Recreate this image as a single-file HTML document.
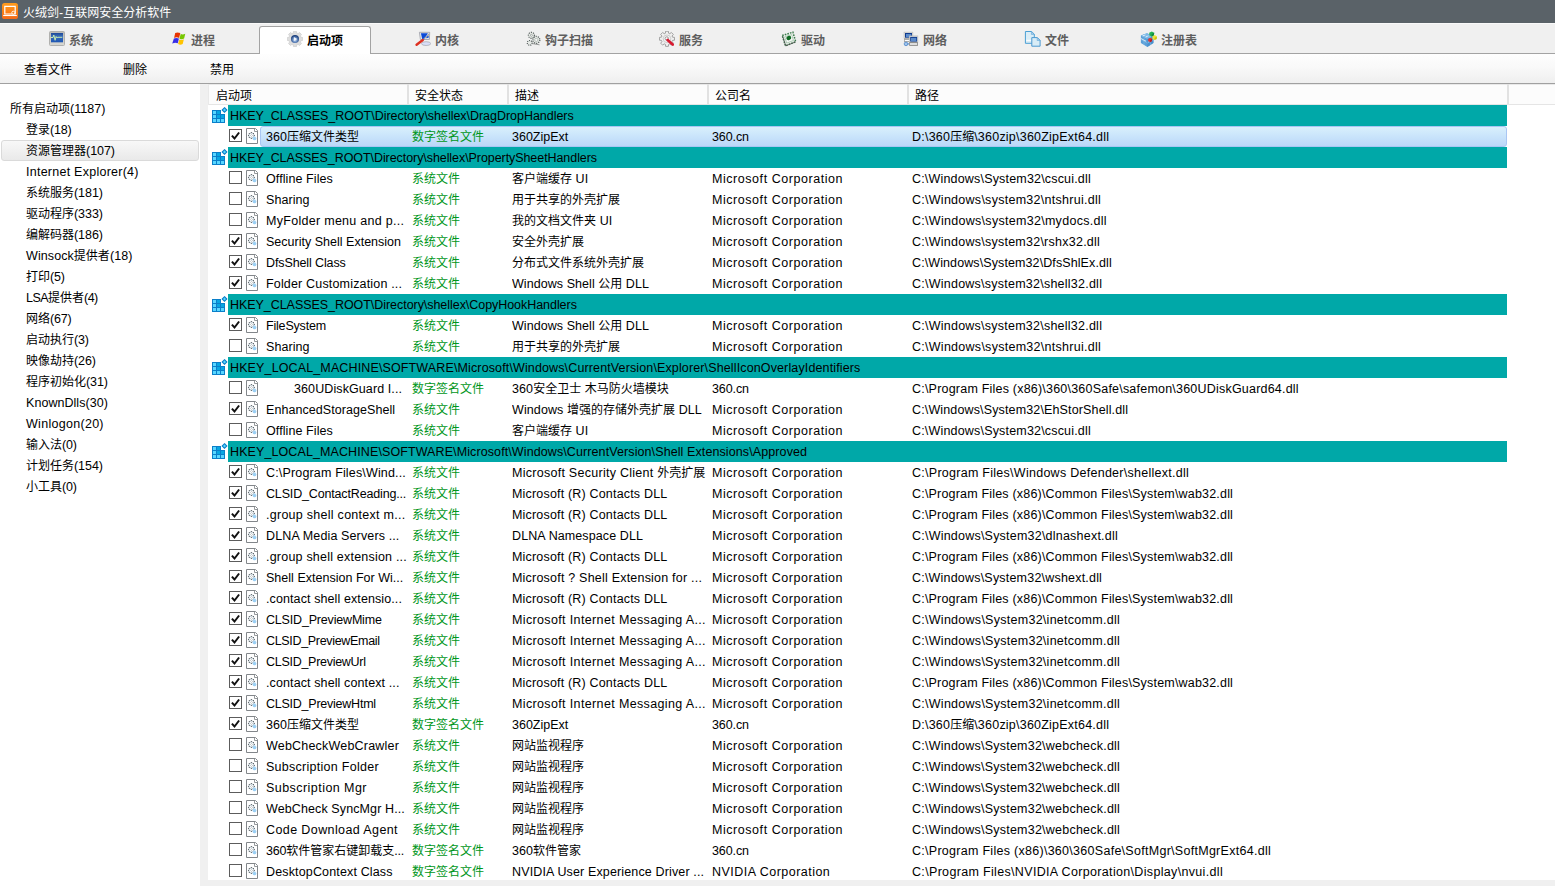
<!DOCTYPE html>
<html lang="zh-CN"><head><meta charset="utf-8"><title>火绒剑-互联网安全分析软件</title>
<style>
*{margin:0;padding:0;box-sizing:border-box}
html,body{width:1555px;height:886px;overflow:hidden;background:#f0f0f0}
body{position:relative;font-family:"Liberation Sans","Noto Sans CJK SC",sans-serif;font-size:12px;color:#000;line-height:21px}
.l{font-size:12.5px}
.abs{position:absolute}
#title{left:0;top:0;width:1555px;height:23px;background:#5a6268;color:#fff;line-height:23px}
#title .ic{position:absolute;left:2px;top:3px;width:16px;height:16px}
#title>span{position:absolute;left:23px;top:2px;white-space:nowrap}
#tabs{left:0;top:23px;width:1555px;height:31px;background:#f0f0f0;border-bottom:1px solid #a3a3a3;box-shadow:inset 0 1px 0 #f9f9f9}
.tab{position:absolute;top:3px;height:28px;width:112px;font-weight:bold;color:#5e5e5e;white-space:nowrap}
.tab svg{position:absolute;top:5px}
.tab span{position:absolute;top:5px;line-height:21px}
.tab.on svg{top:4px}.tab.on span{top:4px}
.tab.on{background:#fff;border:1px solid #a3a3a3;border-bottom:none;border-radius:3px 3px 0 0;color:#000;height:29px}
#tool{left:0;top:54px;width:1555px;height:30px;background:linear-gradient(#fefefe,#f9f9f9 45%,#efefef);border-bottom:1px solid #a0a0a0}
#tool span{position:absolute;top:6px;white-space:nowrap}
#side{left:0;top:84px;width:200px;height:802px;background:#fff}
.si{position:absolute;left:0;width:200px;height:21px;white-space:nowrap}
.si>span{position:absolute;top:1px}
.si.sel{left:1px;width:198px;background:linear-gradient(#f8f8f8,#e9e9e9);border:1px solid #dadada;border-radius:3px}
.si.sel>span{top:0}
#list{left:208px;top:84px;width:1347px;height:796px;background:#fff;overflow:hidden}
#hdr{position:absolute;left:0;top:0;width:1347px;height:21px;background:#fcfcfc;box-shadow:inset 1px 1px 0 #e9e9e9,inset 0 -1px 0 #e5e5e5}
#hdr span{position:absolute;top:2px;line-height:21px;white-space:nowrap}
#hdr i{position:absolute;top:0;width:2px;height:20px;background:#e2e2e2}
.r{position:absolute;left:0;width:1347px;height:21px;white-space:nowrap}
.g b{position:absolute;left:20px;top:0;width:1279px;height:21px;background:#00a8a8;font-weight:normal;padding-left:2px;padding-top:1px;line-height:21px;overflow:hidden}
.gi{position:absolute;left:4px;top:1px}
.r>span{position:absolute;top:1px;line-height:21px;height:20px;overflow:hidden}
.cb{position:absolute;left:21px;top:3px;width:13px;height:13px;border:1px solid #5c5c5c;background:#fff}
.cb svg{position:absolute;left:0;top:0}
.fi{position:absolute;left:38px;top:2px}
.c1{left:58px;width:142px}.c2{left:204px;color:#00961a}.c3{left:304px;width:196px}.c4{left:504px}.c5{left:704px}
.selbg{position:absolute;left:52px;top:0;width:1247px;height:21px;border:1px solid #a9c6f3;border-radius:3px;background:linear-gradient(#d9f0fc,#c9e4fb 50%,#bbd7f8)}

</style></head><body>
<div id="title" class="abs"><svg class="ic" viewBox="0 0 16 16"><defs><linearGradient id="og" x1="0" y1="0" x2="0" y2="1"><stop offset="0" stop-color="#ff9c1c"/><stop offset=".55" stop-color="#fb7f16"/><stop offset="1" stop-color="#f46a1a"/></linearGradient></defs><rect x="0" y="0" width="16" height="16" rx="2.600" fill="url(#og)"/><path d="M2.800 3.400h10.400v7.600H2.800z" fill="none" stroke="#fff" stroke-width="1.200"/><path d="M1.200 12.500h13.600" stroke="#fff" stroke-width="1.100"/><circle cx="11.300" cy="9.700" r="1.500" fill="#fb8418" stroke="#fff" stroke-width=".900"/></svg><span>火绒剑<span class="l">-</span>互联网安全分析软件</span></div>
<div id="tabs" class="abs">
<div class="tab" style="left:15px"><svg style="left:34px" width="16" height="16" viewBox="0 0 16 16"><defs><linearGradient id="sy1" x1="0" y1="0" x2="0" y2="1"><stop offset="0" stop-color="#b9b9b7"/><stop offset="1" stop-color="#d9d9d3"/></linearGradient><linearGradient id="sy2" x1="0" y1="0" x2="0" y2="1"><stop offset="0" stop-color="#1c4796"/><stop offset=".35" stop-color="#3a6cb8"/><stop offset="1" stop-color="#1d56b4"/></linearGradient></defs><rect x=".5" y=".5" width="15" height="14" rx="1" fill="url(#sy1)" stroke="#b0b0ae"/><rect x="2" y="2" width="12" height="9.300" fill="url(#sy2)"/><path d="M2 6.500h2l.8-2.500 1.300 5.300 1-3.800.9 1.500.8-.700h4.500" fill="none" stroke="#c4eab0" stroke-width="1"/></svg><span style="left:54px">系统</span></div>
<div class="tab" style="left:137px"><svg style="left:34px" width="16" height="16" viewBox="0 0 16 16"><path d="M4.200 1.900Q6.700 .8 9.300 2.100L8.100 6.900Q5.700 5.800 3.100 6.900Z" fill="#e83400"/><path d="M9.700 3Q12 4.100 14.300 2.700L13.100 7.600Q10.800 8.900 8.500 7.700Z" fill="#76c600"/><path d="M2.900 7.500Q5.500 6.400 7.900 7.600L6.800 12.300Q4.300 11.300 1.200 12.600Z" fill="#382ee6"/><path d="M8.300 8.400Q10.600 9.500 12.900 8.200L11.700 13Q9.400 14.300 7.100 13.100Z" fill="#ffc400"/></svg><span style="left:54px">进程</span></div>
<div class="tab on" style="left:259px;top:3px"><svg style="left:27px" width="16" height="16" viewBox="0 0 16 16"><defs><radialGradient id="gb" cx=".5" cy=".62" r=".55"><stop offset="0" stop-color="#dfe9f7"/><stop offset=".45" stop-color="#6f94c8"/><stop offset="1" stop-color="#1d3f7c"/></radialGradient></defs><path d="M9.66 13.97 L9.39 15.78 L6.61 15.78 L6.34 13.97 L4.95 13.40 L3.48 14.48 L1.52 12.52 L2.60 11.05 L2.03 9.66 L0.22 9.39 L0.22 6.61 L2.03 6.34 L2.60 4.95 L1.52 3.48 L3.48 1.52 L4.95 2.60 L6.34 2.03 L6.61 0.22 L9.39 0.22 L9.66 2.03 L11.05 2.60 L12.52 1.52 L14.48 3.48 L13.40 4.95 L13.97 6.34 L15.78 6.61 L15.78 9.39 L13.97 9.66 L13.40 11.05 L14.48 12.52 L12.52 14.48 L11.05 13.40Z" fill="#dedede" stroke="#d0d0d0" stroke-width=".800" stroke-linejoin="round"/><circle cx="8" cy="8" r="4" fill="url(#gb)"/><path d="M6.900 5.900l3.200 2-3.200 2.100z" fill="#f4f6fa"/></svg><span style="left:47px">启动项</span></div>
<div class="tab" style="left:381px"><svg style="left:34px" width="16" height="16" viewBox="0 0 16 16"><path d="M4.400 1.300h10.300l-.3 7.200h-9z" fill="#e6e8ee" stroke="#9a9ca4" stroke-width=".800"/><path d="M5.900 2.200h7l-3.600 6.300h-2z" fill="#0a4ad8"/><path d="M12.200 4.800l1.500-.300v2.200l-2.800.500z" fill="#1a58d8"/><ellipse cx="11.100" cy="12.600" rx="4.600" ry="1.900" fill="#d8def8" stroke="#a2a4ac" stroke-width=".700"/><path d="M8 8.800L14 3" stroke="#a9a9ad" stroke-width="1.100"/><path d="M1.600 13.800L7.800 9" stroke="#de3020" stroke-width="2.400" stroke-linecap="round"/></svg><span style="left:54px">内核</span></div>
<div class="tab" style="left:503px"><svg style="left:23px" width="16" height="16" viewBox="0 0 16 16"><circle cx="5.4" cy="4.3" r="3.0" fill="#e6eae6" stroke="#596160" stroke-width="1.2" stroke-dasharray="1.15 1.05"/><circle cx="5.400" cy="4.300" r="1" fill="#fff" stroke="#7a8280" stroke-width=".600"/><circle cx="10.3" cy="8.9" r="3.5" fill="#e6eae6" stroke="#596160" stroke-width="1.3" stroke-dasharray="1.15 1.05"/><circle cx="10.300" cy="8.900" r="1.600" fill="#f6f8f6" stroke="#9aa29e" stroke-width=".600"/><circle cx="3.7" cy="11.9" r="2.4" fill="#e6eae6" stroke="#596160" stroke-width="1.2" stroke-dasharray="1 .9"/><path d="M6.500 12.600l7 1.200" stroke="#707674" stroke-width="1" opacity=".700"/></svg><span style="left:42px">钩子扫描</span></div>
<div class="tab" style="left:625px"><svg style="left:34px" width="16" height="16" viewBox="0 0 16 16"><path d="M9.60 13.37 L9.40 15.37 L6.60 15.37 L6.40 13.37 L5.19 12.87 L3.63 14.14 L1.66 12.17 L2.93 10.61 L2.43 9.40 L0.43 9.20 L0.43 6.40 L2.43 6.20 L2.93 4.99 L1.66 3.43 L3.63 1.46 L5.19 2.73 L6.40 2.23 L6.60 0.23 L9.40 0.23 L9.60 2.23 L10.81 2.73 L12.37 1.46 L14.34 3.43 L13.07 4.99 L13.57 6.20 L15.57 6.40 L15.57 9.20 L13.57 9.40 L13.07 10.61 L14.34 12.17 L12.37 14.14 L10.81 12.87Z" fill="#efefef" stroke="#8f8f8f" stroke-width=".800" stroke-linejoin="round"/><circle cx="8" cy="7.800" r="3.800" fill="#f3f3f3" stroke="#c4c4c4" stroke-width=".800"/><circle cx="7.800" cy="7.500" r="1.700" fill="#fff" stroke="#8e8e8e" stroke-width=".900"/><path d="M8.600 8.900L13.700 13.500" stroke="#d81a30" stroke-width="2.700" stroke-linecap="round"/></svg><span style="left:54px">服务</span></div>
<div class="tab" style="left:747px"><svg style="left:34px" width="16" height="16" viewBox="0 0 16 16"><path d="M1.200 4.500L11.900 1.200L14.700 10.700L4.500 14.800Z" fill="#f2f4f2" stroke="#3c7a4c" stroke-width="1.500" stroke-dasharray="1.600 1.100"/><path d="M1.700 5.300L4.700 14.800L14.700 10.900" fill="none" stroke="#4a4f4c" stroke-width="1" opacity=".800"/><path d="M3.700 5.800L10.700 3.600L12.400 9.500L5.700 12.100Z" fill="#f8f8f8" stroke="#7fb08a" stroke-width=".600"/><ellipse cx="7.800" cy="7" rx="2.500" ry="2" fill="#0f6a22" transform="rotate(-18 7.800 7)"/></svg><span style="left:54px">驱动</span></div>
<div class="tab" style="left:869px"><svg style="left:34px" width="16" height="16" viewBox="0 0 16 16"><rect x="1" y="1.100" width="8.900" height="6.200" fill="#dcdcda" stroke="#b4b4b2" stroke-width=".500"/><rect x="2" y="2" width="7" height="4.700" fill="#0f3a8e"/><rect x="3" y="3" width="5.300" height="3.200" fill="#5a8aca"/><rect x="1" y="7.300" width="8.900" height="3.700" fill="#a2a2a0"/><rect x="1.800" y="8.900" width="6" height="1.200" fill="#fff"/><circle cx="3" cy="12.900" r="1.800" fill="#9fc4ec" stroke="#4f86c8" stroke-width=".800"/><path d="M4.600 12.900h2" stroke="#5a90d0" stroke-width="1.200"/><rect x="6.200" y="4.900" width="8.700" height="6.200" fill="#dcdcda" stroke="#b4b4b2" stroke-width=".500"/><rect x="7.200" y="5.900" width="6.900" height="4.700" fill="#0f3a8e"/><rect x="8" y="6.900" width="5.300" height="3.300" fill="#5a8aca"/><rect x="6.200" y="11" width="8.700" height="3.900" fill="#8e8e8c"/><rect x="7" y="12.300" width="7" height="1.400" fill="#fff"/></svg><span style="left:54px">网络</span></div>
<div class="tab" style="left:991px"><svg style="left:33px" width="17" height="16" viewBox="0 0 17 16"><path d="M1.400 .500H7.600L10.300 3.200V12.300H1.400Z" fill="#dbedf6" stroke="#4a9fd4" stroke-width="1"/><path d="M7.400 .600V3.400H10.200Z" fill="#b7d4ec" stroke="#5aa4d6" stroke-width=".600"/><rect x="2.200" y="8.800" width="7" height="1" fill="#fff"/><path d="M7.800 6.600H13.400L16.100 9.300V15.200H7.800Z" fill="#d8ecf6" stroke="#4a98d0" stroke-width="1"/><path d="M13.200 6.700V9.500H16Z" fill="#b7d4ec" stroke="#5aa4d6" stroke-width=".600"/></svg><span style="left:54px">文件</span></div>
<div class="tab" style="left:1113px"><svg style="left:27px" width="18" height="16" viewBox="0 0 18 16"><path d="M.9 4.600L7 2.300L13.400 5.200V12L7.300 15.900L.9 12Z" fill="#5a9fd8"/><path d="M.9 4.600L7 2.300L13.400 5.200L7.300 8Z" fill="#7ab8e6"/><path d="M7.300 8L13.400 5.200V12L7.300 15.900Z" fill="#4a92ce"/><path d="M3 4.800l2-.700M6 5.900l2-.800M3.500 9.100l2.200 1M1.500 7.800l1.800.9M8.800 10.900l3-1.600" stroke="#e6f2fb" stroke-width="1" stroke-linecap="round"/><path d="M.9 8.400l6.400 3.600 6.100-3.300M4 3.500l6.400 3M4 6.400v7.400M10.400 6.600v7.300" stroke="#8cc0e8" stroke-width=".500" fill="none"/><path d="M9.200 1.800l2.600-1.300 2.400 1.300-.300 2.700-2.300 1.100-2.200-1.300z" fill="#22b255"/><path d="M11.700 3l2.500-1.200-.300 2.700-2.300 1.100z" fill="#128a3e"/><path d="M12.400 5.400l2.400-1.300 2.100 1.300-.200 2.500-2.300 1.200-2-1.400z" fill="#eee43a"/><path d="M14.600 6.700l2.300-1.300-.200 2.500-2.300 1.200z" fill="#c8c016"/><path d="M8.200 7.900l2-1.100 1.900 1-.1 2.300-2 1.100-1.800-1.200z" fill="#e03434"/><path d="M10.100 9l2-1.200-.1 2.300-2 1.100z" fill="#b81e1e"/></svg><span style="left:48px">注册表</span></div>
</div>
<div id="tool" class="abs"><span style="left:24px">查看文件</span><span style="left:123px">删除</span><span style="left:210px">禁用</span></div>
<div id="side" class="abs">
<div class="si" style="top:14px"><span style="left:10px">所有启动项<span class="l" style="letter-spacing:0.04px">(1187)</span></span></div>
<div class="si" style="top:35px"><span style="left:26px">登录<span class="l" style="letter-spacing:-0.16px">(18)</span></span></div>
<div class="si sel" style="top:56px"><span style="left:24px">资源管理器<span class="l" style="letter-spacing:-0.04px">(107)</span></span></div>
<div class="si" style="top:77px"><span style="left:26px"><span class="l" style="letter-spacing:0.25px">Internet Explorer(4)</span></span></div>
<div class="si" style="top:98px"><span style="left:26px">系统服务<span class="l" style="letter-spacing:-0.06px">(181)</span></span></div>
<div class="si" style="top:119px"><span style="left:26px">驱动程序<span class="l" style="letter-spacing:-0.06px">(333)</span></span></div>
<div class="si" style="top:140px"><span style="left:26px">编解码器<span class="l" style="letter-spacing:-0.06px">(186)</span></span></div>
<div class="si" style="top:161px"><span style="left:26px"><span class="l" style="letter-spacing:0.09px">Winsock</span>提供者<span class="l" style="letter-spacing:0.09px">(18)</span></span></div>
<div class="si" style="top:182px"><span style="left:26px">打印<span class="l" style="letter-spacing:-0.20px">(5)</span></span></div>
<div class="si" style="top:203px"><span style="left:26px"><span class="l" style="letter-spacing:-0.54px">LSA</span>提供者<span class="l" style="letter-spacing:-0.54px">(4)</span></span></div>
<div class="si" style="top:224px"><span style="left:26px">网络<span class="l" style="letter-spacing:-0.16px">(67)</span></span></div>
<div class="si" style="top:245px"><span style="left:26px">启动执行<span class="l" style="letter-spacing:-0.20px">(3)</span></span></div>
<div class="si" style="top:266px"><span style="left:26px">映像劫持<span class="l" style="letter-spacing:-0.11px">(26)</span></span></div>
<div class="si" style="top:287px"><span style="left:26px">程序初始化<span class="l" style="letter-spacing:-0.09px">(31)</span></span></div>
<div class="si" style="top:308px"><span style="left:26px"><span class="l" style="letter-spacing:0.05px">KnownDlls(30)</span></span></div>
<div class="si" style="top:329px"><span style="left:26px"><span class="l" style="letter-spacing:0.29px">Winlogon(20)</span></span></div>
<div class="si" style="top:350px"><span style="left:26px">输入法<span class="l" style="letter-spacing:-0.17px">(0)</span></span></div>
<div class="si" style="top:371px"><span style="left:26px">计划任务<span class="l" style="letter-spacing:-0.06px">(154)</span></span></div>
<div class="si" style="top:392px"><span style="left:26px">小工具<span class="l" style="letter-spacing:-0.17px">(0)</span></span></div>
</div>
<div id="list" class="abs">
<div id="hdr"><span style="left:8px">启动项</span><i style="left:199px"></i><span style="left:207px">安全状态</span><i style="left:299px"></i><span style="left:307px">描述</span><i style="left:499px"></i><span style="left:507px">公司名</span><i style="left:699px"></i><span style="left:707px">路径</span><i style="left:1299px"></i></div>
<div class="r g" style="top:21px"><svg class="gi" width="16" height="17" viewBox="0 0 16 17" shape-rendering="crispEdges"><path fill="#0a7fc9" d="M0 4h9v4h4v9H0z"/><g fill="#58d6ff"><rect x="1" y="5" width="3" height="3"/><rect x="1" y="9" width="3" height="3"/><rect x="1" y="13" width="3" height="3"/><rect x="5" y="13" width="3" height="3"/><rect x="9" y="13" width="3" height="3"/></g><g fill="#06a6e2"><rect x="5" y="5" width="3" height="3"/><rect x="5" y="9" width="3" height="3"/><rect x="9" y="9" width="3" height="3"/></g><path shape-rendering="geometricPrecision" fill="#58d6ff" stroke="#0a7fc9" stroke-width="1.1" d="M12.5 1.700l2.300 2.300-2.300 2.300L10.200 4z"/></svg><b><span class="l" style="letter-spacing:-0.03px">HKEY_CLASSES_ROOT\Directory\shellex\DragDropHandlers</span></b></div>
<div class="r" style="top:42px"><div class="selbg"></div><div class="cb"><svg width="11" height="11" viewBox="0 0 11 11"><path d="M1.900 5.600l2.600 2.900 4.600-6" fill="none" stroke="#111" stroke-width="2"/></svg></div><svg class="fi" width="12" height="16" viewBox="0 0 12 16"><path fill="#fff" stroke="#82868a" d="M.5 .5h9l2 2v13h-11z"/><path fill="none" stroke="#8a8e92" stroke-width=".900" d="M8.500 .700v2.800h2.800"/><circle cx="5.400" cy="7.500" r="2.700" fill="#e3ecf1" stroke="#9fabb2" stroke-width=".700"/><path fill="#5e6468" d="M7.88 7.03h0.95v0.95h-0.95zM7.01 9.11h0.95v0.95h-0.95zM4.93 9.97h0.95v0.95h-0.95zM2.84 9.11h0.95v0.95h-0.95zM1.98 7.03h0.95v0.95h-0.95zM2.84 4.94h0.95v0.95h-0.95zM4.92 4.08h0.95v0.95h-0.95zM7.01 4.94h0.95v0.95h-0.95z"/><circle cx="5.400" cy="7.500" r="1.700" fill="#fff"/><path fill="#767c80" d="M6.05 7.15h0.70v0.70h-0.70zM5.05 8.15h0.70v0.70h-0.70zM4.05 7.15h0.70v0.70h-0.70zM5.05 6.15h0.70v0.70h-0.70z"/><circle cx="8.500" cy="10.400" r="1.850" fill="#93ccf4"/><path fill="#fff" d="M8.87 10.77h0.60v0.60h-0.60zM7.53 10.77h0.60v0.60h-0.60zM7.53 9.43h0.60v0.60h-0.60zM8.87 9.43h0.60v0.60h-0.60z"/></svg><span class="c1"><span class="l" style="letter-spacing:0.04px">360</span>压缩文件类型</span><span class="c2">数字签名文件</span><span class="c3"><span class="l" style="letter-spacing:-0.01px">360ZipExt</span></span><span class="c4"><span class="l" style="letter-spacing:-0.11px">360.cn</span></span><span class="c5"><span class="l" style="letter-spacing:0.22px">D:\360</span>压缩<span class="l" style="letter-spacing:0.22px">\360zip\360ZipExt64.dll</span></span></div>
<div class="r g" style="top:63px"><svg class="gi" width="16" height="17" viewBox="0 0 16 17" shape-rendering="crispEdges"><path fill="#0a7fc9" d="M0 4h9v4h4v9H0z"/><g fill="#58d6ff"><rect x="1" y="5" width="3" height="3"/><rect x="1" y="9" width="3" height="3"/><rect x="1" y="13" width="3" height="3"/><rect x="5" y="13" width="3" height="3"/><rect x="9" y="13" width="3" height="3"/></g><g fill="#06a6e2"><rect x="5" y="5" width="3" height="3"/><rect x="5" y="9" width="3" height="3"/><rect x="9" y="9" width="3" height="3"/></g><path shape-rendering="geometricPrecision" fill="#58d6ff" stroke="#0a7fc9" stroke-width="1.1" d="M12.5 1.700l2.300 2.300-2.300 2.300L10.200 4z"/></svg><b><span class="l" style="letter-spacing:-0.07px">HKEY_CLASSES_ROOT\Directory\shellex\PropertySheetHandlers</span></b></div>
<div class="r" style="top:84px"><div class="cb"></div><svg class="fi" width="12" height="16" viewBox="0 0 12 16"><path fill="#fff" stroke="#82868a" d="M.5 .5h9l2 2v13h-11z"/><path fill="none" stroke="#8a8e92" stroke-width=".900" d="M8.500 .700v2.800h2.800"/><circle cx="5.400" cy="7.500" r="2.700" fill="#e3ecf1" stroke="#9fabb2" stroke-width=".700"/><path fill="#5e6468" d="M7.88 7.03h0.95v0.95h-0.95zM7.01 9.11h0.95v0.95h-0.95zM4.93 9.97h0.95v0.95h-0.95zM2.84 9.11h0.95v0.95h-0.95zM1.98 7.03h0.95v0.95h-0.95zM2.84 4.94h0.95v0.95h-0.95zM4.92 4.08h0.95v0.95h-0.95zM7.01 4.94h0.95v0.95h-0.95z"/><circle cx="5.400" cy="7.500" r="1.700" fill="#fff"/><path fill="#767c80" d="M6.05 7.15h0.70v0.70h-0.70zM5.05 8.15h0.70v0.70h-0.70zM4.05 7.15h0.70v0.70h-0.70zM5.05 6.15h0.70v0.70h-0.70z"/><circle cx="8.500" cy="10.400" r="1.850" fill="#93ccf4"/><path fill="#fff" d="M8.87 10.77h0.60v0.60h-0.60zM7.53 10.77h0.60v0.60h-0.60zM7.53 9.43h0.60v0.60h-0.60zM8.87 9.43h0.60v0.60h-0.60z"/></svg><span class="c1"><span class="l" style="letter-spacing:0.09px">Offline Files</span></span><span class="c2">系统文件</span><span class="c3">客户端缓存<span class="l" style="letter-spacing:0.10px"> UI</span></span><span class="c4"><span class="l" style="letter-spacing:0.55px">Microsoft Corporation</span></span><span class="c5"><span class="l" style="letter-spacing:0.18px">C:\Windows\System32\cscui.dll</span></span></div>
<div class="r" style="top:105px"><div class="cb"></div><svg class="fi" width="12" height="16" viewBox="0 0 12 16"><path fill="#fff" stroke="#82868a" d="M.5 .5h9l2 2v13h-11z"/><path fill="none" stroke="#8a8e92" stroke-width=".900" d="M8.500 .700v2.800h2.800"/><circle cx="5.400" cy="7.500" r="2.700" fill="#e3ecf1" stroke="#9fabb2" stroke-width=".700"/><path fill="#5e6468" d="M7.88 7.03h0.95v0.95h-0.95zM7.01 9.11h0.95v0.95h-0.95zM4.93 9.97h0.95v0.95h-0.95zM2.84 9.11h0.95v0.95h-0.95zM1.98 7.03h0.95v0.95h-0.95zM2.84 4.94h0.95v0.95h-0.95zM4.92 4.08h0.95v0.95h-0.95zM7.01 4.94h0.95v0.95h-0.95z"/><circle cx="5.400" cy="7.500" r="1.700" fill="#fff"/><path fill="#767c80" d="M6.05 7.15h0.70v0.70h-0.70zM5.05 8.15h0.70v0.70h-0.70zM4.05 7.15h0.70v0.70h-0.70zM5.05 6.15h0.70v0.70h-0.70z"/><circle cx="8.500" cy="10.400" r="1.850" fill="#93ccf4"/><path fill="#fff" d="M8.87 10.77h0.60v0.60h-0.60zM7.53 10.77h0.60v0.60h-0.60zM7.53 9.43h0.60v0.60h-0.60zM8.87 9.43h0.60v0.60h-0.60z"/></svg><span class="c1"><span class="l" style="letter-spacing:0.07px">Sharing</span></span><span class="c2">系统文件</span><span class="c3">用于共享的外壳扩展</span><span class="c4"><span class="l" style="letter-spacing:0.55px">Microsoft Corporation</span></span><span class="c5"><span class="l" style="letter-spacing:0.27px">C:\Windows\system32\ntshrui.dll</span></span></div>
<div class="r" style="top:126px"><div class="cb"></div><svg class="fi" width="12" height="16" viewBox="0 0 12 16"><path fill="#fff" stroke="#82868a" d="M.5 .5h9l2 2v13h-11z"/><path fill="none" stroke="#8a8e92" stroke-width=".900" d="M8.500 .700v2.800h2.800"/><circle cx="5.400" cy="7.500" r="2.700" fill="#e3ecf1" stroke="#9fabb2" stroke-width=".700"/><path fill="#5e6468" d="M7.88 7.03h0.95v0.95h-0.95zM7.01 9.11h0.95v0.95h-0.95zM4.93 9.97h0.95v0.95h-0.95zM2.84 9.11h0.95v0.95h-0.95zM1.98 7.03h0.95v0.95h-0.95zM2.84 4.94h0.95v0.95h-0.95zM4.92 4.08h0.95v0.95h-0.95zM7.01 4.94h0.95v0.95h-0.95z"/><circle cx="5.400" cy="7.500" r="1.700" fill="#fff"/><path fill="#767c80" d="M6.05 7.15h0.70v0.70h-0.70zM5.05 8.15h0.70v0.70h-0.70zM4.05 7.15h0.70v0.70h-0.70zM5.05 6.15h0.70v0.70h-0.70z"/><circle cx="8.500" cy="10.400" r="1.850" fill="#93ccf4"/><path fill="#fff" d="M8.87 10.77h0.60v0.60h-0.60zM7.53 10.77h0.60v0.60h-0.60zM7.53 9.43h0.60v0.60h-0.60zM8.87 9.43h0.60v0.60h-0.60z"/></svg><span class="c1"><span class="l" style="letter-spacing:0.29px">MyFolder menu and p...</span></span><span class="c2">系统文件</span><span class="c3">我的文档文件夹<span class="l" style="letter-spacing:0.17px"> UI</span></span><span class="c4"><span class="l" style="letter-spacing:0.55px">Microsoft Corporation</span></span><span class="c5"><span class="l" style="letter-spacing:0.29px">C:\Windows\system32\mydocs.dll</span></span></div>
<div class="r" style="top:147px"><div class="cb"><svg width="11" height="11" viewBox="0 0 11 11"><path d="M1.900 5.600l2.600 2.900 4.600-6" fill="none" stroke="#111" stroke-width="2"/></svg></div><svg class="fi" width="12" height="16" viewBox="0 0 12 16"><path fill="#fff" stroke="#82868a" d="M.5 .5h9l2 2v13h-11z"/><path fill="none" stroke="#8a8e92" stroke-width=".900" d="M8.500 .700v2.800h2.800"/><circle cx="5.400" cy="7.500" r="2.700" fill="#e3ecf1" stroke="#9fabb2" stroke-width=".700"/><path fill="#5e6468" d="M7.88 7.03h0.95v0.95h-0.95zM7.01 9.11h0.95v0.95h-0.95zM4.93 9.97h0.95v0.95h-0.95zM2.84 9.11h0.95v0.95h-0.95zM1.98 7.03h0.95v0.95h-0.95zM2.84 4.94h0.95v0.95h-0.95zM4.92 4.08h0.95v0.95h-0.95zM7.01 4.94h0.95v0.95h-0.95z"/><circle cx="5.400" cy="7.500" r="1.700" fill="#fff"/><path fill="#767c80" d="M6.05 7.15h0.70v0.70h-0.70zM5.05 8.15h0.70v0.70h-0.70zM4.05 7.15h0.70v0.70h-0.70zM5.05 6.15h0.70v0.70h-0.70z"/><circle cx="8.500" cy="10.400" r="1.850" fill="#93ccf4"/><path fill="#fff" d="M8.87 10.77h0.60v0.60h-0.60zM7.53 10.77h0.60v0.60h-0.60zM7.53 9.43h0.60v0.60h-0.60zM8.87 9.43h0.60v0.60h-0.60z"/></svg><span class="c1"><span class="l" style="letter-spacing:0.01px">Security Shell Extension</span></span><span class="c2">系统文件</span><span class="c3">安全外壳扩展</span><span class="c4"><span class="l" style="letter-spacing:0.55px">Microsoft Corporation</span></span><span class="c5"><span class="l" style="letter-spacing:0.25px">C:\Windows\system32\rshx32.dll</span></span></div>
<div class="r" style="top:168px"><div class="cb"><svg width="11" height="11" viewBox="0 0 11 11"><path d="M1.900 5.600l2.600 2.900 4.600-6" fill="none" stroke="#111" stroke-width="2"/></svg></div><svg class="fi" width="12" height="16" viewBox="0 0 12 16"><path fill="#fff" stroke="#82868a" d="M.5 .5h9l2 2v13h-11z"/><path fill="none" stroke="#8a8e92" stroke-width=".900" d="M8.500 .700v2.800h2.800"/><circle cx="5.400" cy="7.500" r="2.700" fill="#e3ecf1" stroke="#9fabb2" stroke-width=".700"/><path fill="#5e6468" d="M7.88 7.03h0.95v0.95h-0.95zM7.01 9.11h0.95v0.95h-0.95zM4.93 9.97h0.95v0.95h-0.95zM2.84 9.11h0.95v0.95h-0.95zM1.98 7.03h0.95v0.95h-0.95zM2.84 4.94h0.95v0.95h-0.95zM4.92 4.08h0.95v0.95h-0.95zM7.01 4.94h0.95v0.95h-0.95z"/><circle cx="5.400" cy="7.500" r="1.700" fill="#fff"/><path fill="#767c80" d="M6.05 7.15h0.70v0.70h-0.70zM5.05 8.15h0.70v0.70h-0.70zM4.05 7.15h0.70v0.70h-0.70zM5.05 6.15h0.70v0.70h-0.70z"/><circle cx="8.500" cy="10.400" r="1.850" fill="#93ccf4"/><path fill="#fff" d="M8.87 10.77h0.60v0.60h-0.60zM7.53 10.77h0.60v0.60h-0.60zM7.53 9.43h0.60v0.60h-0.60zM8.87 9.43h0.60v0.60h-0.60z"/></svg><span class="c1"><span class="l" style="letter-spacing:-0.11px">DfsShell Class</span></span><span class="c2">系统文件</span><span class="c3">分布式文件系统外壳扩展</span><span class="c4"><span class="l" style="letter-spacing:0.55px">Microsoft Corporation</span></span><span class="c5"><span class="l" style="letter-spacing:0.10px">C:\Windows\System32\DfsShlEx.dll</span></span></div>
<div class="r" style="top:189px"><div class="cb"><svg width="11" height="11" viewBox="0 0 11 11"><path d="M1.900 5.600l2.600 2.900 4.600-6" fill="none" stroke="#111" stroke-width="2"/></svg></div><svg class="fi" width="12" height="16" viewBox="0 0 12 16"><path fill="#fff" stroke="#82868a" d="M.5 .5h9l2 2v13h-11z"/><path fill="none" stroke="#8a8e92" stroke-width=".900" d="M8.500 .700v2.800h2.800"/><circle cx="5.400" cy="7.500" r="2.700" fill="#e3ecf1" stroke="#9fabb2" stroke-width=".700"/><path fill="#5e6468" d="M7.88 7.03h0.95v0.95h-0.95zM7.01 9.11h0.95v0.95h-0.95zM4.93 9.97h0.95v0.95h-0.95zM2.84 9.11h0.95v0.95h-0.95zM1.98 7.03h0.95v0.95h-0.95zM2.84 4.94h0.95v0.95h-0.95zM4.92 4.08h0.95v0.95h-0.95zM7.01 4.94h0.95v0.95h-0.95z"/><circle cx="5.400" cy="7.500" r="1.700" fill="#fff"/><path fill="#767c80" d="M6.05 7.15h0.70v0.70h-0.70zM5.05 8.15h0.70v0.70h-0.70zM4.05 7.15h0.70v0.70h-0.70zM5.05 6.15h0.70v0.70h-0.70z"/><circle cx="8.500" cy="10.400" r="1.850" fill="#93ccf4"/><path fill="#fff" d="M8.87 10.77h0.60v0.60h-0.60zM7.53 10.77h0.60v0.60h-0.60zM7.53 9.43h0.60v0.60h-0.60zM8.87 9.43h0.60v0.60h-0.60z"/></svg><span class="c1"><span class="l" style="letter-spacing:0.17px">Folder Customization ...</span></span><span class="c2">系统文件</span><span class="c3"><span class="l" style="letter-spacing:0.06px">Windows Shell </span>公用<span class="l" style="letter-spacing:0.06px"> DLL</span></span><span class="c4"><span class="l" style="letter-spacing:0.55px">Microsoft Corporation</span></span><span class="c5"><span class="l" style="letter-spacing:0.24px">C:\Windows\system32\shell32.dll</span></span></div>
<div class="r g" style="top:210px"><svg class="gi" width="16" height="17" viewBox="0 0 16 17" shape-rendering="crispEdges"><path fill="#0a7fc9" d="M0 4h9v4h4v9H0z"/><g fill="#58d6ff"><rect x="1" y="5" width="3" height="3"/><rect x="1" y="9" width="3" height="3"/><rect x="1" y="13" width="3" height="3"/><rect x="5" y="13" width="3" height="3"/><rect x="9" y="13" width="3" height="3"/></g><g fill="#06a6e2"><rect x="5" y="5" width="3" height="3"/><rect x="5" y="9" width="3" height="3"/><rect x="9" y="9" width="3" height="3"/></g><path shape-rendering="geometricPrecision" fill="#58d6ff" stroke="#0a7fc9" stroke-width="1.1" d="M12.5 1.700l2.300 2.300-2.300 2.300L10.200 4z"/></svg><b><span class="l" style="letter-spacing:-0.05px">HKEY_CLASSES_ROOT\Directory\shellex\CopyHookHandlers</span></b></div>
<div class="r" style="top:231px"><div class="cb"><svg width="11" height="11" viewBox="0 0 11 11"><path d="M1.900 5.600l2.600 2.900 4.600-6" fill="none" stroke="#111" stroke-width="2"/></svg></div><svg class="fi" width="12" height="16" viewBox="0 0 12 16"><path fill="#fff" stroke="#82868a" d="M.5 .5h9l2 2v13h-11z"/><path fill="none" stroke="#8a8e92" stroke-width=".900" d="M8.500 .700v2.800h2.800"/><circle cx="5.400" cy="7.500" r="2.700" fill="#e3ecf1" stroke="#9fabb2" stroke-width=".700"/><path fill="#5e6468" d="M7.88 7.03h0.95v0.95h-0.95zM7.01 9.11h0.95v0.95h-0.95zM4.93 9.97h0.95v0.95h-0.95zM2.84 9.11h0.95v0.95h-0.95zM1.98 7.03h0.95v0.95h-0.95zM2.84 4.94h0.95v0.95h-0.95zM4.92 4.08h0.95v0.95h-0.95zM7.01 4.94h0.95v0.95h-0.95z"/><circle cx="5.400" cy="7.500" r="1.700" fill="#fff"/><path fill="#767c80" d="M6.05 7.15h0.70v0.70h-0.70zM5.05 8.15h0.70v0.70h-0.70zM4.05 7.15h0.70v0.70h-0.70zM5.05 6.15h0.70v0.70h-0.70z"/><circle cx="8.500" cy="10.400" r="1.850" fill="#93ccf4"/><path fill="#fff" d="M8.87 10.77h0.60v0.60h-0.60zM7.53 10.77h0.60v0.60h-0.60zM7.53 9.43h0.60v0.60h-0.60zM8.87 9.43h0.60v0.60h-0.60z"/></svg><span class="c1"><span class="l" style="letter-spacing:-0.19px">FileSystem</span></span><span class="c2">系统文件</span><span class="c3"><span class="l" style="letter-spacing:0.06px">Windows Shell </span>公用<span class="l" style="letter-spacing:0.06px"> DLL</span></span><span class="c4"><span class="l" style="letter-spacing:0.55px">Microsoft Corporation</span></span><span class="c5"><span class="l" style="letter-spacing:0.24px">C:\Windows\system32\shell32.dll</span></span></div>
<div class="r" style="top:252px"><div class="cb"></div><svg class="fi" width="12" height="16" viewBox="0 0 12 16"><path fill="#fff" stroke="#82868a" d="M.5 .5h9l2 2v13h-11z"/><path fill="none" stroke="#8a8e92" stroke-width=".900" d="M8.500 .700v2.800h2.800"/><circle cx="5.400" cy="7.500" r="2.700" fill="#e3ecf1" stroke="#9fabb2" stroke-width=".700"/><path fill="#5e6468" d="M7.88 7.03h0.95v0.95h-0.95zM7.01 9.11h0.95v0.95h-0.95zM4.93 9.97h0.95v0.95h-0.95zM2.84 9.11h0.95v0.95h-0.95zM1.98 7.03h0.95v0.95h-0.95zM2.84 4.94h0.95v0.95h-0.95zM4.92 4.08h0.95v0.95h-0.95zM7.01 4.94h0.95v0.95h-0.95z"/><circle cx="5.400" cy="7.500" r="1.700" fill="#fff"/><path fill="#767c80" d="M6.05 7.15h0.70v0.70h-0.70zM5.05 8.15h0.70v0.70h-0.70zM4.05 7.15h0.70v0.70h-0.70zM5.05 6.15h0.70v0.70h-0.70z"/><circle cx="8.500" cy="10.400" r="1.850" fill="#93ccf4"/><path fill="#fff" d="M8.87 10.77h0.60v0.60h-0.60zM7.53 10.77h0.60v0.60h-0.60zM7.53 9.43h0.60v0.60h-0.60zM8.87 9.43h0.60v0.60h-0.60z"/></svg><span class="c1"><span class="l" style="letter-spacing:0.07px">Sharing</span></span><span class="c2">系统文件</span><span class="c3">用于共享的外壳扩展</span><span class="c4"><span class="l" style="letter-spacing:0.55px">Microsoft Corporation</span></span><span class="c5"><span class="l" style="letter-spacing:0.27px">C:\Windows\system32\ntshrui.dll</span></span></div>
<div class="r g" style="top:273px"><svg class="gi" width="16" height="17" viewBox="0 0 16 17" shape-rendering="crispEdges"><path fill="#0a7fc9" d="M0 4h9v4h4v9H0z"/><g fill="#58d6ff"><rect x="1" y="5" width="3" height="3"/><rect x="1" y="9" width="3" height="3"/><rect x="1" y="13" width="3" height="3"/><rect x="5" y="13" width="3" height="3"/><rect x="9" y="13" width="3" height="3"/></g><g fill="#06a6e2"><rect x="5" y="5" width="3" height="3"/><rect x="5" y="9" width="3" height="3"/><rect x="9" y="9" width="3" height="3"/></g><path shape-rendering="geometricPrecision" fill="#58d6ff" stroke="#0a7fc9" stroke-width="1.1" d="M12.5 1.700l2.300 2.300-2.300 2.300L10.200 4z"/></svg><b><span class="l" style="letter-spacing:0.13px">HKEY_LOCAL_MACHINE\SOFTWARE\Microsoft\Windows\CurrentVersion\Explorer\ShellIconOverlayIdentifiers</span></b></div>
<div class="r" style="top:294px"><div class="cb"></div><svg class="fi" width="12" height="16" viewBox="0 0 12 16"><path fill="#fff" stroke="#82868a" d="M.5 .5h9l2 2v13h-11z"/><path fill="none" stroke="#8a8e92" stroke-width=".900" d="M8.500 .700v2.800h2.800"/><circle cx="5.400" cy="7.500" r="2.700" fill="#e3ecf1" stroke="#9fabb2" stroke-width=".700"/><path fill="#5e6468" d="M7.88 7.03h0.95v0.95h-0.95zM7.01 9.11h0.95v0.95h-0.95zM4.93 9.97h0.95v0.95h-0.95zM2.84 9.11h0.95v0.95h-0.95zM1.98 7.03h0.95v0.95h-0.95zM2.84 4.94h0.95v0.95h-0.95zM4.92 4.08h0.95v0.95h-0.95zM7.01 4.94h0.95v0.95h-0.95z"/><circle cx="5.400" cy="7.500" r="1.700" fill="#fff"/><path fill="#767c80" d="M6.05 7.15h0.70v0.70h-0.70zM5.05 8.15h0.70v0.70h-0.70zM4.05 7.15h0.70v0.70h-0.70zM5.05 6.15h0.70v0.70h-0.70z"/><circle cx="8.500" cy="10.400" r="1.850" fill="#93ccf4"/><path fill="#fff" d="M8.87 10.77h0.60v0.60h-0.60zM7.53 10.77h0.60v0.60h-0.60zM7.53 9.43h0.60v0.60h-0.60zM8.87 9.43h0.60v0.60h-0.60z"/></svg><span class="c1" style="padding-left:28px"><span class="l" style="letter-spacing:0.10px">360UDiskGuard I...</span></span><span class="c2">数字签名文件</span><span class="c3"><span class="l" style="letter-spacing:0.11px">360</span>安全卫士<span class="l" style="letter-spacing:0.11px"> </span>木马防火墙模块</span><span class="c4"><span class="l" style="letter-spacing:-0.11px">360.cn</span></span><span class="c5"><span class="l" style="letter-spacing:0.21px">C:\Program Files (x86)\360\360Safe\safemon\360UDiskGuard64.dll</span></span></div>
<div class="r" style="top:315px"><div class="cb"><svg width="11" height="11" viewBox="0 0 11 11"><path d="M1.900 5.600l2.600 2.900 4.600-6" fill="none" stroke="#111" stroke-width="2"/></svg></div><svg class="fi" width="12" height="16" viewBox="0 0 12 16"><path fill="#fff" stroke="#82868a" d="M.5 .5h9l2 2v13h-11z"/><path fill="none" stroke="#8a8e92" stroke-width=".900" d="M8.500 .700v2.800h2.800"/><circle cx="5.400" cy="7.500" r="2.700" fill="#e3ecf1" stroke="#9fabb2" stroke-width=".700"/><path fill="#5e6468" d="M7.88 7.03h0.95v0.95h-0.95zM7.01 9.11h0.95v0.95h-0.95zM4.93 9.97h0.95v0.95h-0.95zM2.84 9.11h0.95v0.95h-0.95zM1.98 7.03h0.95v0.95h-0.95zM2.84 4.94h0.95v0.95h-0.95zM4.92 4.08h0.95v0.95h-0.95zM7.01 4.94h0.95v0.95h-0.95z"/><circle cx="5.400" cy="7.500" r="1.700" fill="#fff"/><path fill="#767c80" d="M6.05 7.15h0.70v0.70h-0.70zM5.05 8.15h0.70v0.70h-0.70zM4.05 7.15h0.70v0.70h-0.70zM5.05 6.15h0.70v0.70h-0.70z"/><circle cx="8.500" cy="10.400" r="1.850" fill="#93ccf4"/><path fill="#fff" d="M8.87 10.77h0.60v0.60h-0.60zM7.53 10.77h0.60v0.60h-0.60zM7.53 9.43h0.60v0.60h-0.60zM8.87 9.43h0.60v0.60h-0.60z"/></svg><span class="c1"><span class="l" style="letter-spacing:0.06px">EnhancedStorageShell</span></span><span class="c2">系统文件</span><span class="c3"><span class="l" style="letter-spacing:0.11px">Windows </span>增强的存储外壳扩展<span class="l" style="letter-spacing:0.11px"> DLL</span></span><span class="c4"><span class="l" style="letter-spacing:0.55px">Microsoft Corporation</span></span><span class="c5"><span class="l" style="letter-spacing:0.14px">C:\Windows\System32\EhStorShell.dll</span></span></div>
<div class="r" style="top:336px"><div class="cb"></div><svg class="fi" width="12" height="16" viewBox="0 0 12 16"><path fill="#fff" stroke="#82868a" d="M.5 .5h9l2 2v13h-11z"/><path fill="none" stroke="#8a8e92" stroke-width=".900" d="M8.500 .700v2.800h2.800"/><circle cx="5.400" cy="7.500" r="2.700" fill="#e3ecf1" stroke="#9fabb2" stroke-width=".700"/><path fill="#5e6468" d="M7.88 7.03h0.95v0.95h-0.95zM7.01 9.11h0.95v0.95h-0.95zM4.93 9.97h0.95v0.95h-0.95zM2.84 9.11h0.95v0.95h-0.95zM1.98 7.03h0.95v0.95h-0.95zM2.84 4.94h0.95v0.95h-0.95zM4.92 4.08h0.95v0.95h-0.95zM7.01 4.94h0.95v0.95h-0.95z"/><circle cx="5.400" cy="7.500" r="1.700" fill="#fff"/><path fill="#767c80" d="M6.05 7.15h0.70v0.70h-0.70zM5.05 8.15h0.70v0.70h-0.70zM4.05 7.15h0.70v0.70h-0.70zM5.05 6.15h0.70v0.70h-0.70z"/><circle cx="8.500" cy="10.400" r="1.850" fill="#93ccf4"/><path fill="#fff" d="M8.87 10.77h0.60v0.60h-0.60zM7.53 10.77h0.60v0.60h-0.60zM7.53 9.43h0.60v0.60h-0.60zM8.87 9.43h0.60v0.60h-0.60z"/></svg><span class="c1"><span class="l" style="letter-spacing:0.09px">Offline Files</span></span><span class="c2">系统文件</span><span class="c3">客户端缓存<span class="l" style="letter-spacing:0.10px"> UI</span></span><span class="c4"><span class="l" style="letter-spacing:0.55px">Microsoft Corporation</span></span><span class="c5"><span class="l" style="letter-spacing:0.18px">C:\Windows\System32\cscui.dll</span></span></div>
<div class="r g" style="top:357px"><svg class="gi" width="16" height="17" viewBox="0 0 16 17" shape-rendering="crispEdges"><path fill="#0a7fc9" d="M0 4h9v4h4v9H0z"/><g fill="#58d6ff"><rect x="1" y="5" width="3" height="3"/><rect x="1" y="9" width="3" height="3"/><rect x="1" y="13" width="3" height="3"/><rect x="5" y="13" width="3" height="3"/><rect x="9" y="13" width="3" height="3"/></g><g fill="#06a6e2"><rect x="5" y="5" width="3" height="3"/><rect x="5" y="9" width="3" height="3"/><rect x="9" y="9" width="3" height="3"/></g><path shape-rendering="geometricPrecision" fill="#58d6ff" stroke="#0a7fc9" stroke-width="1.1" d="M12.5 1.700l2.300 2.300-2.300 2.300L10.200 4z"/></svg><b><span class="l" style="letter-spacing:0.10px">HKEY_LOCAL_MACHINE\SOFTWARE\Microsoft\Windows\CurrentVersion\Shell Extensions\Approved</span></b></div>
<div class="r" style="top:378px"><div class="cb"><svg width="11" height="11" viewBox="0 0 11 11"><path d="M1.900 5.600l2.600 2.900 4.600-6" fill="none" stroke="#111" stroke-width="2"/></svg></div><svg class="fi" width="12" height="16" viewBox="0 0 12 16"><path fill="#fff" stroke="#82868a" d="M.5 .5h9l2 2v13h-11z"/><path fill="none" stroke="#8a8e92" stroke-width=".900" d="M8.500 .700v2.800h2.800"/><circle cx="5.400" cy="7.500" r="2.700" fill="#e3ecf1" stroke="#9fabb2" stroke-width=".700"/><path fill="#5e6468" d="M7.88 7.03h0.95v0.95h-0.95zM7.01 9.11h0.95v0.95h-0.95zM4.93 9.97h0.95v0.95h-0.95zM2.84 9.11h0.95v0.95h-0.95zM1.98 7.03h0.95v0.95h-0.95zM2.84 4.94h0.95v0.95h-0.95zM4.92 4.08h0.95v0.95h-0.95zM7.01 4.94h0.95v0.95h-0.95z"/><circle cx="5.400" cy="7.500" r="1.700" fill="#fff"/><path fill="#767c80" d="M6.05 7.15h0.70v0.70h-0.70zM5.05 8.15h0.70v0.70h-0.70zM4.05 7.15h0.70v0.70h-0.70zM5.05 6.15h0.70v0.70h-0.70z"/><circle cx="8.500" cy="10.400" r="1.850" fill="#93ccf4"/><path fill="#fff" d="M8.87 10.77h0.60v0.60h-0.60zM7.53 10.77h0.60v0.60h-0.60zM7.53 9.43h0.60v0.60h-0.60zM8.87 9.43h0.60v0.60h-0.60z"/></svg><span class="c1"><span class="l" style="letter-spacing:0.16px">C:\Program Files\Wind...</span></span><span class="c2">系统文件</span><span class="c3"><span class="l" style="letter-spacing:0.27px">Microsoft Security Client </span>外壳扩展</span><span class="c4"><span class="l" style="letter-spacing:0.55px">Microsoft Corporation</span></span><span class="c5"><span class="l" style="letter-spacing:0.27px">C:\Program Files\Windows Defender\shellext.dll</span></span></div>
<div class="r" style="top:399px"><div class="cb"><svg width="11" height="11" viewBox="0 0 11 11"><path d="M1.900 5.600l2.600 2.900 4.600-6" fill="none" stroke="#111" stroke-width="2"/></svg></div><svg class="fi" width="12" height="16" viewBox="0 0 12 16"><path fill="#fff" stroke="#82868a" d="M.5 .5h9l2 2v13h-11z"/><path fill="none" stroke="#8a8e92" stroke-width=".900" d="M8.500 .700v2.800h2.800"/><circle cx="5.400" cy="7.500" r="2.700" fill="#e3ecf1" stroke="#9fabb2" stroke-width=".700"/><path fill="#5e6468" d="M7.88 7.03h0.95v0.95h-0.95zM7.01 9.11h0.95v0.95h-0.95zM4.93 9.97h0.95v0.95h-0.95zM2.84 9.11h0.95v0.95h-0.95zM1.98 7.03h0.95v0.95h-0.95zM2.84 4.94h0.95v0.95h-0.95zM4.92 4.08h0.95v0.95h-0.95zM7.01 4.94h0.95v0.95h-0.95z"/><circle cx="5.400" cy="7.500" r="1.700" fill="#fff"/><path fill="#767c80" d="M6.05 7.15h0.70v0.70h-0.70zM5.05 8.15h0.70v0.70h-0.70zM4.05 7.15h0.70v0.70h-0.70zM5.05 6.15h0.70v0.70h-0.70z"/><circle cx="8.500" cy="10.400" r="1.850" fill="#93ccf4"/><path fill="#fff" d="M8.87 10.77h0.60v0.60h-0.60zM7.53 10.77h0.60v0.60h-0.60zM7.53 9.43h0.60v0.60h-0.60zM8.87 9.43h0.60v0.60h-0.60z"/></svg><span class="c1"><span class="l" style="letter-spacing:-0.16px">CLSID_ContactReading...</span></span><span class="c2">系统文件</span><span class="c3"><span class="l" style="letter-spacing:0.18px">Microsoft (R) Contacts DLL</span></span><span class="c4"><span class="l" style="letter-spacing:0.55px">Microsoft Corporation</span></span><span class="c5"><span class="l" style="letter-spacing:0.19px">C:\Program Files (x86)\Common Files\System\wab32.dll</span></span></div>
<div class="r" style="top:420px"><div class="cb"><svg width="11" height="11" viewBox="0 0 11 11"><path d="M1.900 5.600l2.600 2.900 4.600-6" fill="none" stroke="#111" stroke-width="2"/></svg></div><svg class="fi" width="12" height="16" viewBox="0 0 12 16"><path fill="#fff" stroke="#82868a" d="M.5 .5h9l2 2v13h-11z"/><path fill="none" stroke="#8a8e92" stroke-width=".900" d="M8.500 .700v2.800h2.800"/><circle cx="5.400" cy="7.500" r="2.700" fill="#e3ecf1" stroke="#9fabb2" stroke-width=".700"/><path fill="#5e6468" d="M7.88 7.03h0.95v0.95h-0.95zM7.01 9.11h0.95v0.95h-0.95zM4.93 9.97h0.95v0.95h-0.95zM2.84 9.11h0.95v0.95h-0.95zM1.98 7.03h0.95v0.95h-0.95zM2.84 4.94h0.95v0.95h-0.95zM4.92 4.08h0.95v0.95h-0.95zM7.01 4.94h0.95v0.95h-0.95z"/><circle cx="5.400" cy="7.500" r="1.700" fill="#fff"/><path fill="#767c80" d="M6.05 7.15h0.70v0.70h-0.70zM5.05 8.15h0.70v0.70h-0.70zM4.05 7.15h0.70v0.70h-0.70zM5.05 6.15h0.70v0.70h-0.70z"/><circle cx="8.500" cy="10.400" r="1.850" fill="#93ccf4"/><path fill="#fff" d="M8.87 10.77h0.60v0.60h-0.60zM7.53 10.77h0.60v0.60h-0.60zM7.53 9.43h0.60v0.60h-0.60zM8.87 9.43h0.60v0.60h-0.60z"/></svg><span class="c1"><span class="l" style="letter-spacing:0.27px">.group shell context m...</span></span><span class="c2">系统文件</span><span class="c3"><span class="l" style="letter-spacing:0.18px">Microsoft (R) Contacts DLL</span></span><span class="c4"><span class="l" style="letter-spacing:0.55px">Microsoft Corporation</span></span><span class="c5"><span class="l" style="letter-spacing:0.19px">C:\Program Files (x86)\Common Files\System\wab32.dll</span></span></div>
<div class="r" style="top:441px"><div class="cb"><svg width="11" height="11" viewBox="0 0 11 11"><path d="M1.900 5.600l2.600 2.900 4.600-6" fill="none" stroke="#111" stroke-width="2"/></svg></div><svg class="fi" width="12" height="16" viewBox="0 0 12 16"><path fill="#fff" stroke="#82868a" d="M.5 .5h9l2 2v13h-11z"/><path fill="none" stroke="#8a8e92" stroke-width=".900" d="M8.500 .700v2.800h2.800"/><circle cx="5.400" cy="7.500" r="2.700" fill="#e3ecf1" stroke="#9fabb2" stroke-width=".700"/><path fill="#5e6468" d="M7.88 7.03h0.95v0.95h-0.95zM7.01 9.11h0.95v0.95h-0.95zM4.93 9.97h0.95v0.95h-0.95zM2.84 9.11h0.95v0.95h-0.95zM1.98 7.03h0.95v0.95h-0.95zM2.84 4.94h0.95v0.95h-0.95zM4.92 4.08h0.95v0.95h-0.95zM7.01 4.94h0.95v0.95h-0.95z"/><circle cx="5.400" cy="7.500" r="1.700" fill="#fff"/><path fill="#767c80" d="M6.05 7.15h0.70v0.70h-0.70zM5.05 8.15h0.70v0.70h-0.70zM4.05 7.15h0.70v0.70h-0.70zM5.05 6.15h0.70v0.70h-0.70z"/><circle cx="8.500" cy="10.400" r="1.850" fill="#93ccf4"/><path fill="#fff" d="M8.87 10.77h0.60v0.60h-0.60zM7.53 10.77h0.60v0.60h-0.60zM7.53 9.43h0.60v0.60h-0.60zM8.87 9.43h0.60v0.60h-0.60z"/></svg><span class="c1"><span class="l" style="letter-spacing:0.13px">DLNA Media Servers ...</span></span><span class="c2">系统文件</span><span class="c3"><span class="l" style="letter-spacing:0.10px">DLNA Namespace DLL</span></span><span class="c4"><span class="l" style="letter-spacing:0.55px">Microsoft Corporation</span></span><span class="c5"><span class="l" style="letter-spacing:0.22px">C:\Windows\System32\dlnashext.dll</span></span></div>
<div class="r" style="top:462px"><div class="cb"><svg width="11" height="11" viewBox="0 0 11 11"><path d="M1.900 5.600l2.600 2.900 4.600-6" fill="none" stroke="#111" stroke-width="2"/></svg></div><svg class="fi" width="12" height="16" viewBox="0 0 12 16"><path fill="#fff" stroke="#82868a" d="M.5 .5h9l2 2v13h-11z"/><path fill="none" stroke="#8a8e92" stroke-width=".900" d="M8.500 .700v2.800h2.800"/><circle cx="5.400" cy="7.500" r="2.700" fill="#e3ecf1" stroke="#9fabb2" stroke-width=".700"/><path fill="#5e6468" d="M7.88 7.03h0.95v0.95h-0.95zM7.01 9.11h0.95v0.95h-0.95zM4.93 9.97h0.95v0.95h-0.95zM2.84 9.11h0.95v0.95h-0.95zM1.98 7.03h0.95v0.95h-0.95zM2.84 4.94h0.95v0.95h-0.95zM4.92 4.08h0.95v0.95h-0.95zM7.01 4.94h0.95v0.95h-0.95z"/><circle cx="5.400" cy="7.500" r="1.700" fill="#fff"/><path fill="#767c80" d="M6.05 7.15h0.70v0.70h-0.70zM5.05 8.15h0.70v0.70h-0.70zM4.05 7.15h0.70v0.70h-0.70zM5.05 6.15h0.70v0.70h-0.70z"/><circle cx="8.500" cy="10.400" r="1.850" fill="#93ccf4"/><path fill="#fff" d="M8.87 10.77h0.60v0.60h-0.60zM7.53 10.77h0.60v0.60h-0.60zM7.53 9.43h0.60v0.60h-0.60zM8.87 9.43h0.60v0.60h-0.60z"/></svg><span class="c1"><span class="l" style="letter-spacing:0.21px">.group shell extension ...</span></span><span class="c2">系统文件</span><span class="c3"><span class="l" style="letter-spacing:0.18px">Microsoft (R) Contacts DLL</span></span><span class="c4"><span class="l" style="letter-spacing:0.55px">Microsoft Corporation</span></span><span class="c5"><span class="l" style="letter-spacing:0.19px">C:\Program Files (x86)\Common Files\System\wab32.dll</span></span></div>
<div class="r" style="top:483px"><div class="cb"><svg width="11" height="11" viewBox="0 0 11 11"><path d="M1.900 5.600l2.600 2.900 4.600-6" fill="none" stroke="#111" stroke-width="2"/></svg></div><svg class="fi" width="12" height="16" viewBox="0 0 12 16"><path fill="#fff" stroke="#82868a" d="M.5 .5h9l2 2v13h-11z"/><path fill="none" stroke="#8a8e92" stroke-width=".900" d="M8.500 .700v2.800h2.800"/><circle cx="5.400" cy="7.500" r="2.700" fill="#e3ecf1" stroke="#9fabb2" stroke-width=".700"/><path fill="#5e6468" d="M7.88 7.03h0.95v0.95h-0.95zM7.01 9.11h0.95v0.95h-0.95zM4.93 9.97h0.95v0.95h-0.95zM2.84 9.11h0.95v0.95h-0.95zM1.98 7.03h0.95v0.95h-0.95zM2.84 4.94h0.95v0.95h-0.95zM4.92 4.08h0.95v0.95h-0.95zM7.01 4.94h0.95v0.95h-0.95z"/><circle cx="5.400" cy="7.500" r="1.700" fill="#fff"/><path fill="#767c80" d="M6.05 7.15h0.70v0.70h-0.70zM5.05 8.15h0.70v0.70h-0.70zM4.05 7.15h0.70v0.70h-0.70zM5.05 6.15h0.70v0.70h-0.70z"/><circle cx="8.500" cy="10.400" r="1.850" fill="#93ccf4"/><path fill="#fff" d="M8.87 10.77h0.60v0.60h-0.60zM7.53 10.77h0.60v0.60h-0.60zM7.53 9.43h0.60v0.60h-0.60zM8.87 9.43h0.60v0.60h-0.60z"/></svg><span class="c1"><span class="l" style="letter-spacing:0.02px">Shell Extension For Wi...</span></span><span class="c2">系统文件</span><span class="c3"><span class="l" style="letter-spacing:0.21px">Microsoft ? Shell Extension for ...</span></span><span class="c4"><span class="l" style="letter-spacing:0.55px">Microsoft Corporation</span></span><span class="c5"><span class="l" style="letter-spacing:0.20px">C:\Windows\System32\wshext.dll</span></span></div>
<div class="r" style="top:504px"><div class="cb"><svg width="11" height="11" viewBox="0 0 11 11"><path d="M1.900 5.600l2.600 2.900 4.600-6" fill="none" stroke="#111" stroke-width="2"/></svg></div><svg class="fi" width="12" height="16" viewBox="0 0 12 16"><path fill="#fff" stroke="#82868a" d="M.5 .5h9l2 2v13h-11z"/><path fill="none" stroke="#8a8e92" stroke-width=".900" d="M8.500 .700v2.800h2.800"/><circle cx="5.400" cy="7.500" r="2.700" fill="#e3ecf1" stroke="#9fabb2" stroke-width=".700"/><path fill="#5e6468" d="M7.88 7.03h0.95v0.95h-0.95zM7.01 9.11h0.95v0.95h-0.95zM4.93 9.97h0.95v0.95h-0.95zM2.84 9.11h0.95v0.95h-0.95zM1.98 7.03h0.95v0.95h-0.95zM2.84 4.94h0.95v0.95h-0.95zM4.92 4.08h0.95v0.95h-0.95zM7.01 4.94h0.95v0.95h-0.95z"/><circle cx="5.400" cy="7.500" r="1.700" fill="#fff"/><path fill="#767c80" d="M6.05 7.15h0.70v0.70h-0.70zM5.05 8.15h0.70v0.70h-0.70zM4.05 7.15h0.70v0.70h-0.70zM5.05 6.15h0.70v0.70h-0.70z"/><circle cx="8.500" cy="10.400" r="1.850" fill="#93ccf4"/><path fill="#fff" d="M8.87 10.77h0.60v0.60h-0.60zM7.53 10.77h0.60v0.60h-0.60zM7.53 9.43h0.60v0.60h-0.60zM8.87 9.43h0.60v0.60h-0.60z"/></svg><span class="c1"><span class="l" style="letter-spacing:0.10px">.contact shell extensio...</span></span><span class="c2">系统文件</span><span class="c3"><span class="l" style="letter-spacing:0.18px">Microsoft (R) Contacts DLL</span></span><span class="c4"><span class="l" style="letter-spacing:0.55px">Microsoft Corporation</span></span><span class="c5"><span class="l" style="letter-spacing:0.19px">C:\Program Files (x86)\Common Files\System\wab32.dll</span></span></div>
<div class="r" style="top:525px"><div class="cb"><svg width="11" height="11" viewBox="0 0 11 11"><path d="M1.900 5.600l2.600 2.900 4.600-6" fill="none" stroke="#111" stroke-width="2"/></svg></div><svg class="fi" width="12" height="16" viewBox="0 0 12 16"><path fill="#fff" stroke="#82868a" d="M.5 .5h9l2 2v13h-11z"/><path fill="none" stroke="#8a8e92" stroke-width=".900" d="M8.500 .700v2.800h2.800"/><circle cx="5.400" cy="7.500" r="2.700" fill="#e3ecf1" stroke="#9fabb2" stroke-width=".700"/><path fill="#5e6468" d="M7.88 7.03h0.95v0.95h-0.95zM7.01 9.11h0.95v0.95h-0.95zM4.93 9.97h0.95v0.95h-0.95zM2.84 9.11h0.95v0.95h-0.95zM1.98 7.03h0.95v0.95h-0.95zM2.84 4.94h0.95v0.95h-0.95zM4.92 4.08h0.95v0.95h-0.95zM7.01 4.94h0.95v0.95h-0.95z"/><circle cx="5.400" cy="7.500" r="1.700" fill="#fff"/><path fill="#767c80" d="M6.05 7.15h0.70v0.70h-0.70zM5.05 8.15h0.70v0.70h-0.70zM4.05 7.15h0.70v0.70h-0.70zM5.05 6.15h0.70v0.70h-0.70z"/><circle cx="8.500" cy="10.400" r="1.850" fill="#93ccf4"/><path fill="#fff" d="M8.87 10.77h0.60v0.60h-0.60zM7.53 10.77h0.60v0.60h-0.60zM7.53 9.43h0.60v0.60h-0.60zM8.87 9.43h0.60v0.60h-0.60z"/></svg><span class="c1"><span class="l" style="letter-spacing:-0.18px">CLSID_PreviewMime</span></span><span class="c2">系统文件</span><span class="c3"><span class="l" style="letter-spacing:0.36px">Microsoft Internet Messaging A...</span></span><span class="c4"><span class="l" style="letter-spacing:0.55px">Microsoft Corporation</span></span><span class="c5"><span class="l" style="letter-spacing:0.27px">C:\Windows\System32\inetcomm.dll</span></span></div>
<div class="r" style="top:546px"><div class="cb"><svg width="11" height="11" viewBox="0 0 11 11"><path d="M1.900 5.600l2.600 2.900 4.600-6" fill="none" stroke="#111" stroke-width="2"/></svg></div><svg class="fi" width="12" height="16" viewBox="0 0 12 16"><path fill="#fff" stroke="#82868a" d="M.5 .5h9l2 2v13h-11z"/><path fill="none" stroke="#8a8e92" stroke-width=".900" d="M8.500 .700v2.800h2.800"/><circle cx="5.400" cy="7.500" r="2.700" fill="#e3ecf1" stroke="#9fabb2" stroke-width=".700"/><path fill="#5e6468" d="M7.88 7.03h0.95v0.95h-0.95zM7.01 9.11h0.95v0.95h-0.95zM4.93 9.97h0.95v0.95h-0.95zM2.84 9.11h0.95v0.95h-0.95zM1.98 7.03h0.95v0.95h-0.95zM2.84 4.94h0.95v0.95h-0.95zM4.92 4.08h0.95v0.95h-0.95zM7.01 4.94h0.95v0.95h-0.95z"/><circle cx="5.400" cy="7.500" r="1.700" fill="#fff"/><path fill="#767c80" d="M6.05 7.15h0.70v0.70h-0.70zM5.05 8.15h0.70v0.70h-0.70zM4.05 7.15h0.70v0.70h-0.70zM5.05 6.15h0.70v0.70h-0.70z"/><circle cx="8.500" cy="10.400" r="1.850" fill="#93ccf4"/><path fill="#fff" d="M8.87 10.77h0.60v0.60h-0.60zM7.53 10.77h0.60v0.60h-0.60zM7.53 9.43h0.60v0.60h-0.60zM8.87 9.43h0.60v0.60h-0.60z"/></svg><span class="c1"><span class="l" style="letter-spacing:-0.32px">CLSID_PreviewEmail</span></span><span class="c2">系统文件</span><span class="c3"><span class="l" style="letter-spacing:0.36px">Microsoft Internet Messaging A...</span></span><span class="c4"><span class="l" style="letter-spacing:0.55px">Microsoft Corporation</span></span><span class="c5"><span class="l" style="letter-spacing:0.27px">C:\Windows\System32\inetcomm.dll</span></span></div>
<div class="r" style="top:567px"><div class="cb"><svg width="11" height="11" viewBox="0 0 11 11"><path d="M1.900 5.600l2.600 2.900 4.600-6" fill="none" stroke="#111" stroke-width="2"/></svg></div><svg class="fi" width="12" height="16" viewBox="0 0 12 16"><path fill="#fff" stroke="#82868a" d="M.5 .5h9l2 2v13h-11z"/><path fill="none" stroke="#8a8e92" stroke-width=".900" d="M8.500 .700v2.800h2.800"/><circle cx="5.400" cy="7.500" r="2.700" fill="#e3ecf1" stroke="#9fabb2" stroke-width=".700"/><path fill="#5e6468" d="M7.88 7.03h0.95v0.95h-0.95zM7.01 9.11h0.95v0.95h-0.95zM4.93 9.97h0.95v0.95h-0.95zM2.84 9.11h0.95v0.95h-0.95zM1.98 7.03h0.95v0.95h-0.95zM2.84 4.94h0.95v0.95h-0.95zM4.92 4.08h0.95v0.95h-0.95zM7.01 4.94h0.95v0.95h-0.95z"/><circle cx="5.400" cy="7.500" r="1.700" fill="#fff"/><path fill="#767c80" d="M6.05 7.15h0.70v0.70h-0.70zM5.05 8.15h0.70v0.70h-0.70zM4.05 7.15h0.70v0.70h-0.70zM5.05 6.15h0.70v0.70h-0.70z"/><circle cx="8.500" cy="10.400" r="1.850" fill="#93ccf4"/><path fill="#fff" d="M8.87 10.77h0.60v0.60h-0.60zM7.53 10.77h0.60v0.60h-0.60zM7.53 9.43h0.60v0.60h-0.60zM8.87 9.43h0.60v0.60h-0.60z"/></svg><span class="c1"><span class="l" style="letter-spacing:-0.28px">CLSID_PreviewUrl</span></span><span class="c2">系统文件</span><span class="c3"><span class="l" style="letter-spacing:0.36px">Microsoft Internet Messaging A...</span></span><span class="c4"><span class="l" style="letter-spacing:0.55px">Microsoft Corporation</span></span><span class="c5"><span class="l" style="letter-spacing:0.27px">C:\Windows\System32\inetcomm.dll</span></span></div>
<div class="r" style="top:588px"><div class="cb"><svg width="11" height="11" viewBox="0 0 11 11"><path d="M1.900 5.600l2.600 2.900 4.600-6" fill="none" stroke="#111" stroke-width="2"/></svg></div><svg class="fi" width="12" height="16" viewBox="0 0 12 16"><path fill="#fff" stroke="#82868a" d="M.5 .5h9l2 2v13h-11z"/><path fill="none" stroke="#8a8e92" stroke-width=".900" d="M8.500 .700v2.800h2.800"/><circle cx="5.400" cy="7.500" r="2.700" fill="#e3ecf1" stroke="#9fabb2" stroke-width=".700"/><path fill="#5e6468" d="M7.88 7.03h0.95v0.95h-0.95zM7.01 9.11h0.95v0.95h-0.95zM4.93 9.97h0.95v0.95h-0.95zM2.84 9.11h0.95v0.95h-0.95zM1.98 7.03h0.95v0.95h-0.95zM2.84 4.94h0.95v0.95h-0.95zM4.92 4.08h0.95v0.95h-0.95zM7.01 4.94h0.95v0.95h-0.95z"/><circle cx="5.400" cy="7.500" r="1.700" fill="#fff"/><path fill="#767c80" d="M6.05 7.15h0.70v0.70h-0.70zM5.05 8.15h0.70v0.70h-0.70zM4.05 7.15h0.70v0.70h-0.70zM5.05 6.15h0.70v0.70h-0.70z"/><circle cx="8.500" cy="10.400" r="1.850" fill="#93ccf4"/><path fill="#fff" d="M8.87 10.77h0.60v0.60h-0.60zM7.53 10.77h0.60v0.60h-0.60zM7.53 9.43h0.60v0.60h-0.60zM8.87 9.43h0.60v0.60h-0.60z"/></svg><span class="c1"><span class="l" style="letter-spacing:0.11px">.contact shell context ...</span></span><span class="c2">系统文件</span><span class="c3"><span class="l" style="letter-spacing:0.18px">Microsoft (R) Contacts DLL</span></span><span class="c4"><span class="l" style="letter-spacing:0.55px">Microsoft Corporation</span></span><span class="c5"><span class="l" style="letter-spacing:0.19px">C:\Program Files (x86)\Common Files\System\wab32.dll</span></span></div>
<div class="r" style="top:609px"><div class="cb"><svg width="11" height="11" viewBox="0 0 11 11"><path d="M1.900 5.600l2.600 2.900 4.600-6" fill="none" stroke="#111" stroke-width="2"/></svg></div><svg class="fi" width="12" height="16" viewBox="0 0 12 16"><path fill="#fff" stroke="#82868a" d="M.5 .5h9l2 2v13h-11z"/><path fill="none" stroke="#8a8e92" stroke-width=".900" d="M8.500 .700v2.800h2.800"/><circle cx="5.400" cy="7.500" r="2.700" fill="#e3ecf1" stroke="#9fabb2" stroke-width=".700"/><path fill="#5e6468" d="M7.88 7.03h0.95v0.95h-0.95zM7.01 9.11h0.95v0.95h-0.95zM4.93 9.97h0.95v0.95h-0.95zM2.84 9.11h0.95v0.95h-0.95zM1.98 7.03h0.95v0.95h-0.95zM2.84 4.94h0.95v0.95h-0.95zM4.92 4.08h0.95v0.95h-0.95zM7.01 4.94h0.95v0.95h-0.95z"/><circle cx="5.400" cy="7.500" r="1.700" fill="#fff"/><path fill="#767c80" d="M6.05 7.15h0.70v0.70h-0.70zM5.05 8.15h0.70v0.70h-0.70zM4.05 7.15h0.70v0.70h-0.70zM5.05 6.15h0.70v0.70h-0.70z"/><circle cx="8.500" cy="10.400" r="1.850" fill="#93ccf4"/><path fill="#fff" d="M8.87 10.77h0.60v0.60h-0.60zM7.53 10.77h0.60v0.60h-0.60zM7.53 9.43h0.60v0.60h-0.60zM8.87 9.43h0.60v0.60h-0.60z"/></svg><span class="c1"><span class="l" style="letter-spacing:-0.24px">CLSID_PreviewHtml</span></span><span class="c2">系统文件</span><span class="c3"><span class="l" style="letter-spacing:0.36px">Microsoft Internet Messaging A...</span></span><span class="c4"><span class="l" style="letter-spacing:0.55px">Microsoft Corporation</span></span><span class="c5"><span class="l" style="letter-spacing:0.27px">C:\Windows\System32\inetcomm.dll</span></span></div>
<div class="r" style="top:630px"><div class="cb"><svg width="11" height="11" viewBox="0 0 11 11"><path d="M1.900 5.600l2.600 2.900 4.600-6" fill="none" stroke="#111" stroke-width="2"/></svg></div><svg class="fi" width="12" height="16" viewBox="0 0 12 16"><path fill="#fff" stroke="#82868a" d="M.5 .5h9l2 2v13h-11z"/><path fill="none" stroke="#8a8e92" stroke-width=".900" d="M8.500 .700v2.800h2.800"/><circle cx="5.400" cy="7.500" r="2.700" fill="#e3ecf1" stroke="#9fabb2" stroke-width=".700"/><path fill="#5e6468" d="M7.88 7.03h0.95v0.95h-0.95zM7.01 9.11h0.95v0.95h-0.95zM4.93 9.97h0.95v0.95h-0.95zM2.84 9.11h0.95v0.95h-0.95zM1.98 7.03h0.95v0.95h-0.95zM2.84 4.94h0.95v0.95h-0.95zM4.92 4.08h0.95v0.95h-0.95zM7.01 4.94h0.95v0.95h-0.95z"/><circle cx="5.400" cy="7.500" r="1.700" fill="#fff"/><path fill="#767c80" d="M6.05 7.15h0.70v0.70h-0.70zM5.05 8.15h0.70v0.70h-0.70zM4.05 7.15h0.70v0.70h-0.70zM5.05 6.15h0.70v0.70h-0.70z"/><circle cx="8.500" cy="10.400" r="1.850" fill="#93ccf4"/><path fill="#fff" d="M8.87 10.77h0.60v0.60h-0.60zM7.53 10.77h0.60v0.60h-0.60zM7.53 9.43h0.60v0.60h-0.60zM8.87 9.43h0.60v0.60h-0.60z"/></svg><span class="c1"><span class="l" style="letter-spacing:0.04px">360</span>压缩文件类型</span><span class="c2">数字签名文件</span><span class="c3"><span class="l" style="letter-spacing:-0.01px">360ZipExt</span></span><span class="c4"><span class="l" style="letter-spacing:-0.11px">360.cn</span></span><span class="c5"><span class="l" style="letter-spacing:0.22px">D:\360</span>压缩<span class="l" style="letter-spacing:0.22px">\360zip\360ZipExt64.dll</span></span></div>
<div class="r" style="top:651px"><div class="cb"></div><svg class="fi" width="12" height="16" viewBox="0 0 12 16"><path fill="#fff" stroke="#82868a" d="M.5 .5h9l2 2v13h-11z"/><path fill="none" stroke="#8a8e92" stroke-width=".900" d="M8.500 .700v2.800h2.800"/><circle cx="5.400" cy="7.500" r="2.700" fill="#e3ecf1" stroke="#9fabb2" stroke-width=".700"/><path fill="#5e6468" d="M7.88 7.03h0.95v0.95h-0.95zM7.01 9.11h0.95v0.95h-0.95zM4.93 9.97h0.95v0.95h-0.95zM2.84 9.11h0.95v0.95h-0.95zM1.98 7.03h0.95v0.95h-0.95zM2.84 4.94h0.95v0.95h-0.95zM4.92 4.08h0.95v0.95h-0.95zM7.01 4.94h0.95v0.95h-0.95z"/><circle cx="5.400" cy="7.500" r="1.700" fill="#fff"/><path fill="#767c80" d="M6.05 7.15h0.70v0.70h-0.70zM5.05 8.15h0.70v0.70h-0.70zM4.05 7.15h0.70v0.70h-0.70zM5.05 6.15h0.70v0.70h-0.70z"/><circle cx="8.500" cy="10.400" r="1.850" fill="#93ccf4"/><path fill="#fff" d="M8.87 10.77h0.60v0.60h-0.60zM7.53 10.77h0.60v0.60h-0.60zM7.53 9.43h0.60v0.60h-0.60zM8.87 9.43h0.60v0.60h-0.60z"/></svg><span class="c1"><span class="l" style="letter-spacing:0.20px">WebCheckWebCrawler</span></span><span class="c2">系统文件</span><span class="c3">网站监视程序</span><span class="c4"><span class="l" style="letter-spacing:0.55px">Microsoft Corporation</span></span><span class="c5"><span class="l" style="letter-spacing:0.23px">C:\Windows\System32\webcheck.dll</span></span></div>
<div class="r" style="top:672px"><div class="cb"></div><svg class="fi" width="12" height="16" viewBox="0 0 12 16"><path fill="#fff" stroke="#82868a" d="M.5 .5h9l2 2v13h-11z"/><path fill="none" stroke="#8a8e92" stroke-width=".900" d="M8.500 .700v2.800h2.800"/><circle cx="5.400" cy="7.500" r="2.700" fill="#e3ecf1" stroke="#9fabb2" stroke-width=".700"/><path fill="#5e6468" d="M7.88 7.03h0.95v0.95h-0.95zM7.01 9.11h0.95v0.95h-0.95zM4.93 9.97h0.95v0.95h-0.95zM2.84 9.11h0.95v0.95h-0.95zM1.98 7.03h0.95v0.95h-0.95zM2.84 4.94h0.95v0.95h-0.95zM4.92 4.08h0.95v0.95h-0.95zM7.01 4.94h0.95v0.95h-0.95z"/><circle cx="5.400" cy="7.500" r="1.700" fill="#fff"/><path fill="#767c80" d="M6.05 7.15h0.70v0.70h-0.70zM5.05 8.15h0.70v0.70h-0.70zM4.05 7.15h0.70v0.70h-0.70zM5.05 6.15h0.70v0.70h-0.70z"/><circle cx="8.500" cy="10.400" r="1.850" fill="#93ccf4"/><path fill="#fff" d="M8.87 10.77h0.60v0.60h-0.60zM7.53 10.77h0.60v0.60h-0.60zM7.53 9.43h0.60v0.60h-0.60zM8.87 9.43h0.60v0.60h-0.60z"/></svg><span class="c1"><span class="l" style="letter-spacing:0.27px">Subscription Folder</span></span><span class="c2">系统文件</span><span class="c3">网站监视程序</span><span class="c4"><span class="l" style="letter-spacing:0.55px">Microsoft Corporation</span></span><span class="c5"><span class="l" style="letter-spacing:0.23px">C:\Windows\System32\webcheck.dll</span></span></div>
<div class="r" style="top:693px"><div class="cb"></div><svg class="fi" width="12" height="16" viewBox="0 0 12 16"><path fill="#fff" stroke="#82868a" d="M.5 .5h9l2 2v13h-11z"/><path fill="none" stroke="#8a8e92" stroke-width=".900" d="M8.500 .700v2.800h2.800"/><circle cx="5.400" cy="7.500" r="2.700" fill="#e3ecf1" stroke="#9fabb2" stroke-width=".700"/><path fill="#5e6468" d="M7.88 7.03h0.95v0.95h-0.95zM7.01 9.11h0.95v0.95h-0.95zM4.93 9.97h0.95v0.95h-0.95zM2.84 9.11h0.95v0.95h-0.95zM1.98 7.03h0.95v0.95h-0.95zM2.84 4.94h0.95v0.95h-0.95zM4.92 4.08h0.95v0.95h-0.95zM7.01 4.94h0.95v0.95h-0.95z"/><circle cx="5.400" cy="7.500" r="1.700" fill="#fff"/><path fill="#767c80" d="M6.05 7.15h0.70v0.70h-0.70zM5.05 8.15h0.70v0.70h-0.70zM4.05 7.15h0.70v0.70h-0.70zM5.05 6.15h0.70v0.70h-0.70z"/><circle cx="8.500" cy="10.400" r="1.850" fill="#93ccf4"/><path fill="#fff" d="M8.87 10.77h0.60v0.60h-0.60zM7.53 10.77h0.60v0.60h-0.60zM7.53 9.43h0.60v0.60h-0.60zM8.87 9.43h0.60v0.60h-0.60z"/></svg><span class="c1"><span class="l" style="letter-spacing:0.45px">Subscription Mgr</span></span><span class="c2">系统文件</span><span class="c3">网站监视程序</span><span class="c4"><span class="l" style="letter-spacing:0.55px">Microsoft Corporation</span></span><span class="c5"><span class="l" style="letter-spacing:0.23px">C:\Windows\System32\webcheck.dll</span></span></div>
<div class="r" style="top:714px"><div class="cb"></div><svg class="fi" width="12" height="16" viewBox="0 0 12 16"><path fill="#fff" stroke="#82868a" d="M.5 .5h9l2 2v13h-11z"/><path fill="none" stroke="#8a8e92" stroke-width=".900" d="M8.500 .700v2.800h2.800"/><circle cx="5.400" cy="7.500" r="2.700" fill="#e3ecf1" stroke="#9fabb2" stroke-width=".700"/><path fill="#5e6468" d="M7.88 7.03h0.95v0.95h-0.95zM7.01 9.11h0.95v0.95h-0.95zM4.93 9.97h0.95v0.95h-0.95zM2.84 9.11h0.95v0.95h-0.95zM1.98 7.03h0.95v0.95h-0.95zM2.84 4.94h0.95v0.95h-0.95zM4.92 4.08h0.95v0.95h-0.95zM7.01 4.94h0.95v0.95h-0.95z"/><circle cx="5.400" cy="7.500" r="1.700" fill="#fff"/><path fill="#767c80" d="M6.05 7.15h0.70v0.70h-0.70zM5.05 8.15h0.70v0.70h-0.70zM4.05 7.15h0.70v0.70h-0.70zM5.05 6.15h0.70v0.70h-0.70z"/><circle cx="8.500" cy="10.400" r="1.850" fill="#93ccf4"/><path fill="#fff" d="M8.87 10.77h0.60v0.60h-0.60zM7.53 10.77h0.60v0.60h-0.60zM7.53 9.43h0.60v0.60h-0.60zM8.87 9.43h0.60v0.60h-0.60z"/></svg><span class="c1"><span class="l" style="letter-spacing:0.11px">WebCheck SyncMgr H...</span></span><span class="c2">系统文件</span><span class="c3">网站监视程序</span><span class="c4"><span class="l" style="letter-spacing:0.55px">Microsoft Corporation</span></span><span class="c5"><span class="l" style="letter-spacing:0.23px">C:\Windows\System32\webcheck.dll</span></span></div>
<div class="r" style="top:735px"><div class="cb"></div><svg class="fi" width="12" height="16" viewBox="0 0 12 16"><path fill="#fff" stroke="#82868a" d="M.5 .5h9l2 2v13h-11z"/><path fill="none" stroke="#8a8e92" stroke-width=".900" d="M8.500 .700v2.800h2.800"/><circle cx="5.400" cy="7.500" r="2.700" fill="#e3ecf1" stroke="#9fabb2" stroke-width=".700"/><path fill="#5e6468" d="M7.88 7.03h0.95v0.95h-0.95zM7.01 9.11h0.95v0.95h-0.95zM4.93 9.97h0.95v0.95h-0.95zM2.84 9.11h0.95v0.95h-0.95zM1.98 7.03h0.95v0.95h-0.95zM2.84 4.94h0.95v0.95h-0.95zM4.92 4.08h0.95v0.95h-0.95zM7.01 4.94h0.95v0.95h-0.95z"/><circle cx="5.400" cy="7.500" r="1.700" fill="#fff"/><path fill="#767c80" d="M6.05 7.15h0.70v0.70h-0.70zM5.05 8.15h0.70v0.70h-0.70zM4.05 7.15h0.70v0.70h-0.70zM5.05 6.15h0.70v0.70h-0.70z"/><circle cx="8.500" cy="10.400" r="1.850" fill="#93ccf4"/><path fill="#fff" d="M8.87 10.77h0.60v0.60h-0.60zM7.53 10.77h0.60v0.60h-0.60zM7.53 9.43h0.60v0.60h-0.60zM8.87 9.43h0.60v0.60h-0.60z"/></svg><span class="c1"><span class="l" style="letter-spacing:0.40px">Code Download Agent</span></span><span class="c2">系统文件</span><span class="c3">网站监视程序</span><span class="c4"><span class="l" style="letter-spacing:0.55px">Microsoft Corporation</span></span><span class="c5"><span class="l" style="letter-spacing:0.23px">C:\Windows\System32\webcheck.dll</span></span></div>
<div class="r" style="top:756px"><div class="cb"></div><svg class="fi" width="12" height="16" viewBox="0 0 12 16"><path fill="#fff" stroke="#82868a" d="M.5 .5h9l2 2v13h-11z"/><path fill="none" stroke="#8a8e92" stroke-width=".900" d="M8.500 .700v2.800h2.800"/><circle cx="5.400" cy="7.500" r="2.700" fill="#e3ecf1" stroke="#9fabb2" stroke-width=".700"/><path fill="#5e6468" d="M7.88 7.03h0.95v0.95h-0.95zM7.01 9.11h0.95v0.95h-0.95zM4.93 9.97h0.95v0.95h-0.95zM2.84 9.11h0.95v0.95h-0.95zM1.98 7.03h0.95v0.95h-0.95zM2.84 4.94h0.95v0.95h-0.95zM4.92 4.08h0.95v0.95h-0.95zM7.01 4.94h0.95v0.95h-0.95z"/><circle cx="5.400" cy="7.500" r="1.700" fill="#fff"/><path fill="#767c80" d="M6.05 7.15h0.70v0.70h-0.70zM5.05 8.15h0.70v0.70h-0.70zM4.05 7.15h0.70v0.70h-0.70zM5.05 6.15h0.70v0.70h-0.70z"/><circle cx="8.500" cy="10.400" r="1.850" fill="#93ccf4"/><path fill="#fff" d="M8.87 10.77h0.60v0.60h-0.60zM7.53 10.77h0.60v0.60h-0.60zM7.53 9.43h0.60v0.60h-0.60zM8.87 9.43h0.60v0.60h-0.60z"/></svg><span class="c1"><span class="l" style="letter-spacing:-0.22px">360</span>软件管家右键卸载支<span class="l" style="letter-spacing:-0.22px">...</span></span><span class="c2">数字签名文件</span><span class="c3"><span class="l" style="letter-spacing:0.01px">360</span>软件管家</span><span class="c4"><span class="l" style="letter-spacing:-0.11px">360.cn</span></span><span class="c5"><span class="l" style="letter-spacing:0.28px">C:\Program Files (x86)\360\360Safe\SoftMgr\SoftMgrExt64.dll</span></span></div>
<div class="r" style="top:777px"><div class="cb"></div><svg class="fi" width="12" height="16" viewBox="0 0 12 16"><path fill="#fff" stroke="#82868a" d="M.5 .5h9l2 2v13h-11z"/><path fill="none" stroke="#8a8e92" stroke-width=".900" d="M8.500 .700v2.800h2.800"/><circle cx="5.400" cy="7.500" r="2.700" fill="#e3ecf1" stroke="#9fabb2" stroke-width=".700"/><path fill="#5e6468" d="M7.88 7.03h0.95v0.95h-0.95zM7.01 9.11h0.95v0.95h-0.95zM4.93 9.97h0.95v0.95h-0.95zM2.84 9.11h0.95v0.95h-0.95zM1.98 7.03h0.95v0.95h-0.95zM2.84 4.94h0.95v0.95h-0.95zM4.92 4.08h0.95v0.95h-0.95zM7.01 4.94h0.95v0.95h-0.95z"/><circle cx="5.400" cy="7.500" r="1.700" fill="#fff"/><path fill="#767c80" d="M6.05 7.15h0.70v0.70h-0.70zM5.05 8.15h0.70v0.70h-0.70zM4.05 7.15h0.70v0.70h-0.70zM5.05 6.15h0.70v0.70h-0.70z"/><circle cx="8.500" cy="10.400" r="1.850" fill="#93ccf4"/><path fill="#fff" d="M8.87 10.77h0.60v0.60h-0.60zM7.53 10.77h0.60v0.60h-0.60zM7.53 9.43h0.60v0.60h-0.60zM8.87 9.43h0.60v0.60h-0.60z"/></svg><span class="c1"><span class="l" style="letter-spacing:0.15px">DesktopContext Class</span></span><span class="c2">数字签名文件</span><span class="c3"><span class="l" style="letter-spacing:0.14px">NVIDIA User Experience Driver ...</span></span><span class="c4"><span class="l" style="letter-spacing:0.47px">NVIDIA Corporation</span></span><span class="c5"><span class="l" style="letter-spacing:0.33px">C:\Program Files\NVIDIA Corporation\Display\nvui.dll</span></span></div>
</div>
</body></html>
